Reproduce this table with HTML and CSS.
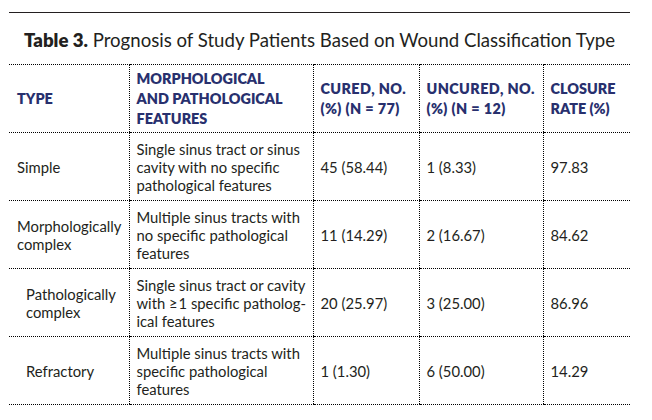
FILE: index.html
```html
<!DOCTYPE html>
<html lang="en">
<head>
<meta charset="utf-8">
<title>Table 3</title>
<link rel="stylesheet" href="styles.css">
</head>
<body>
<div class="page">
  <div class="rule"></div>
  <h1 class="title"><b>Table 3.</b> Prognosis of Study Patients Based on Wound Classification Type</h1>
  <table class="data">
    <colgroup>
      <col class="c1"><col class="c2"><col class="c3"><col class="c4"><col class="c5">
    </colgroup>
    <thead>
      <tr>
        <th>TYPE</th>
        <th>MORPHOLOGICAL<br>AND PATHOLOGICAL<br>FEATURES</th>
        <th class="num">CURED, NO.<br>(%) (N = 77)</th>
        <th class="num">UNCURED, NO.<br>(%) (N = 12)</th>
        <th>CLOSURE<br>RATE (%)</th>
      </tr>
    </thead>
    <tbody>
      <tr>
        <td>Simple</td>
        <td>Single sinus tract or sinus<br>cavity with no specific<br>pathological features</td>
        <td>45 (58.44)</td>
        <td>1 (8.33)</td>
        <td>97.83</td>
      </tr>
      <tr>
        <td>Morphologically<br>complex</td>
        <td>Multiple sinus tracts with<br>no specific pathological<br>features</td>
        <td>11 (14.29)</td>
        <td>2 (16.67)</td>
        <td>84.62</td>
      </tr>
      <tr>
        <td class="indent">Pathologically<br>complex</td>
        <td>Single sinus tract or cavity<br>with ≥&#8202;1 specific patholog-<br>ical features</td>
        <td>20 (25.97)</td>
        <td>3 (25.00)</td>
        <td>86.96</td>
      </tr>
      <tr>
        <td class="indent">Refractory</td>
        <td>Multiple sinus tracts with<br>specific pathological<br>features</td>
        <td>1 (1.30)</td>
        <td>6 (50.00)</td>
        <td>14.29</td>
      </tr>
    </tbody>
  </table>
</div>
</body>
</html>
```
FILE: styles.css
```css
html, body {
  margin: 0;
  padding: 0;
  background: #ffffff;
}

.page {
  width: 621px;
  margin-left: 9px;
  padding-top: 12px;
  font-family: Lato, "Noto Sans", sans-serif;
  color: #231f20;
}

.rule {
  border-top: 1px solid #231f20;
}

.title {
  margin: 0;
  padding-top: 16px;
  height: 35px;
  text-align: center;
  font-size: 18.6px;
  line-height: 22px;
  font-weight: 400;
  color: #231f20;
}

.title b {
  font-weight: 800;
}

.data {
  width: 621px;
  border-collapse: collapse;
  table-layout: fixed;
  font-size: 14.8px;
  line-height: 18px;
}

.c1 { width: 120px; }
.c2 { width: 184px; }
.c3 { width: 106px; }
.c4 { width: 124px; }
.c5 { width: 87px; }

.data th,
.data td {
  border-top: 1px dotted #000;
  border-bottom: 1px dotted #000;
  border-left: 1px dotted #000;
  padding: 0 0 0 7px;
  text-align: left;
  vertical-align: middle;
  height: 67px;
}

.data th:first-child,
.data td:first-child {
  border-left: none;
  padding-left: 8px;
}

.data th {
  color: #28306e;
  font-weight: 800;
  font-size: 14.4px;
  line-height: 20px;
}

.data th.num {
  letter-spacing: 0.4px;
}

.data td.indent {
  padding-left: 17px;
}
```
